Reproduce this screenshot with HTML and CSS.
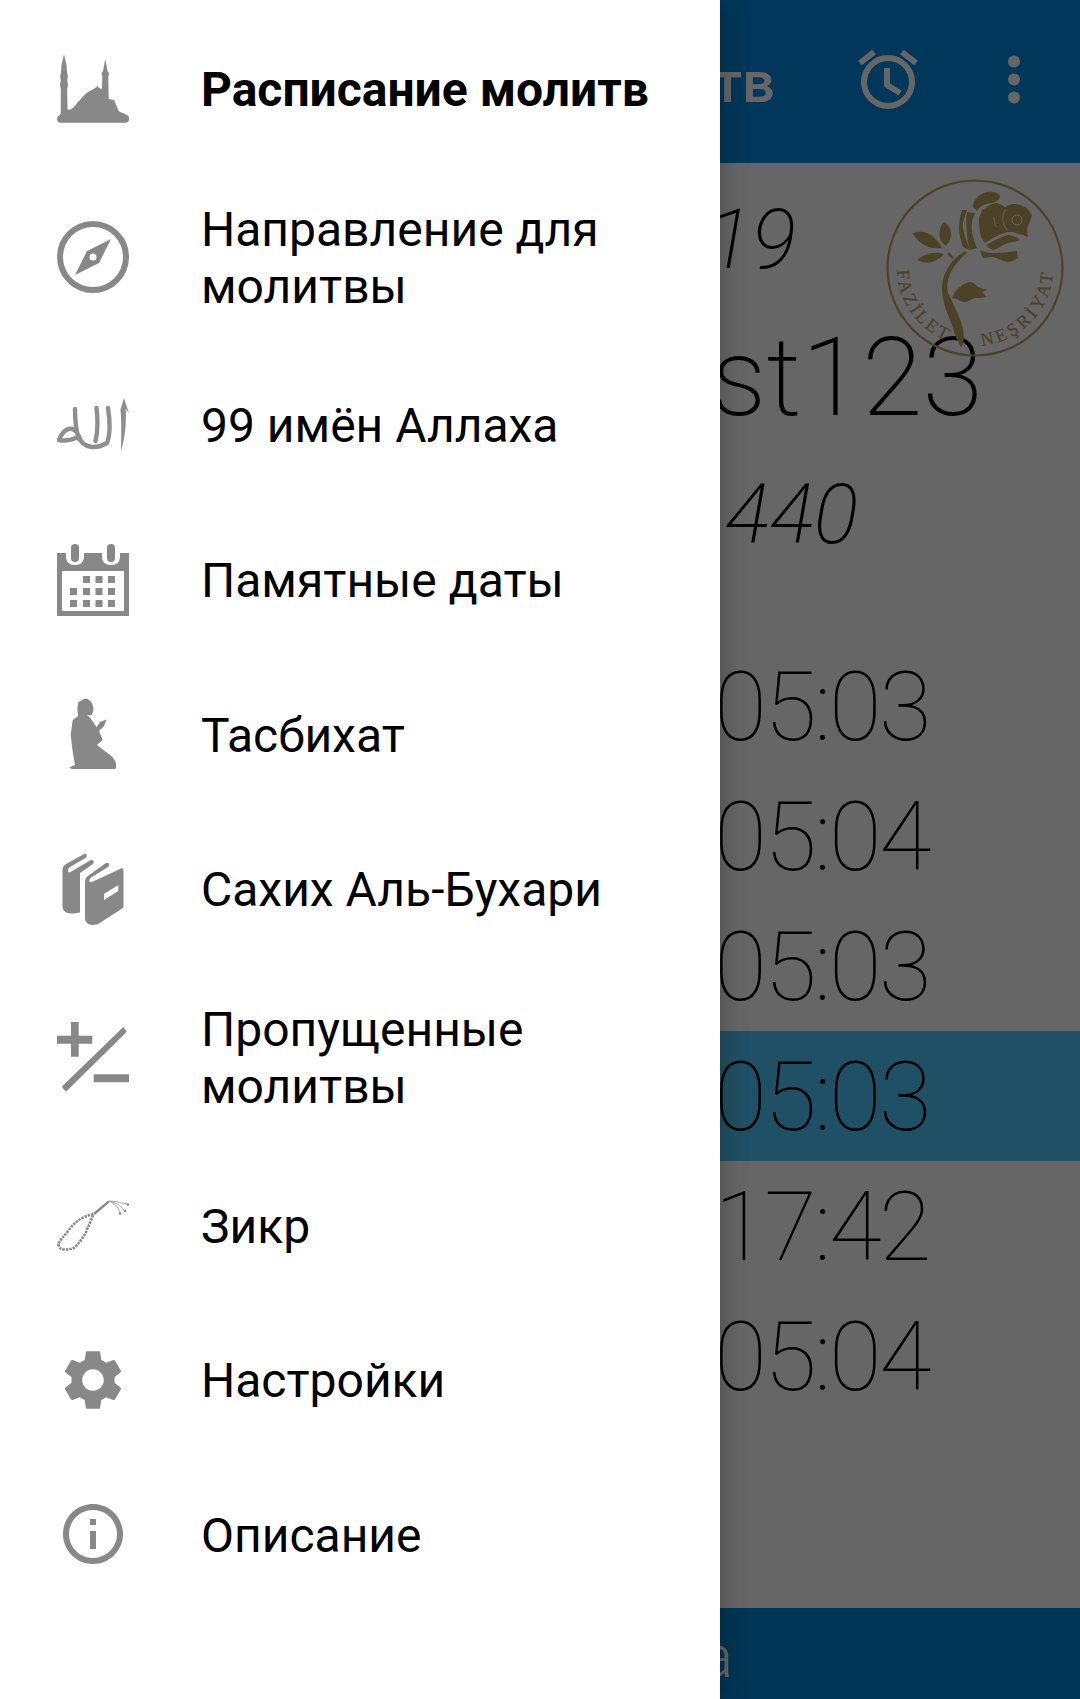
FILE: index.html
```html
<!DOCTYPE html>
<html lang="ru">
<head>
<meta charset="utf-8">
<title>Расписание молитв</title>
<link rel="stylesheet" href="styles.css">
</head>
<body>
<div class="screen">
  <div class="app">
    <header class="toolbar">
      <div class="toolbar-title">Расписание молитв</div>
      <svg class="alarm" viewBox="0 0 72 72"><circle cx="36" cy="36" r="24" fill="none" stroke="#fff" stroke-width="6"/><path d="M35 22V39L48 47M8 17L22 6M64 17L50 6" fill="none" stroke="#fff" stroke-width="6"/></svg>
      <svg class="more" viewBox="0 0 12 72"><circle cx="6" cy="15.5" r="6" fill="#fff"/><circle cx="6" cy="33.5" r="6" fill="#fff"/><circle cx="6" cy="51.5" r="6" fill="#fff"/></svg>
    </header>
    <main class="content">
      <div class="date date-greg">2019</div>
      <div class="city">Test123</div>
      <div class="date date-hijri">1440</div>
      <ul class="times">
        <li class="time">05:03</li>
        <li class="time">05:04</li>
        <li class="time">05:03</li>
        <li class="time time-now">05:03</li>
        <li class="time">17:42</li>
        <li class="time">05:04</li>
      </ul>
    </main>
    <footer class="bottombar"><span class="bottom-text">Мекка</span></footer>
    <svg class="logo" viewBox="0 0 190 190">
      <circle cx="95" cy="93" r="87.5" fill="none" stroke="#c0a55f" stroke-width="2.2"/>
      <g fill="#c0a55f">
        <path d="M33 58C45 54 55 60 62 73C48 75 38 68 33 58Z"/>
        <path d="M64 47C72 52 74 62 66 71C58 66 57 54 64 47Z"/>
        <path d="M37 85C45 78 55 76 64 79C58 86 47 91 37 85Z"/>
        <path d="M68 78L73 83" stroke="#c0a55f" stroke-width="2.5"/>
        <path d="M93 32C92 26 100 18 107 17C113 16 120 18 120 22C119 26 112 28 107 29C102 30 99 33 97 36Z"/>
        <path d="M102 35C106 33 110 29 115 28C119 28 122 30 125 32C128 30 131 29 133 29C139 29 144 31 147 33L152 40C151 45 149 49 147 53L148 62L133 57H128C121 59 114 62 110 65L105 68C102 64 100 61 100 57C99 52 99 47 99 43Z"/>
        <path d="M106 70C113 66 121 62 128 60C132 60 137 62 140 65C136 67 132 67 128 68C122 70 118 74 113 75C110 74 108 72 106 70Z"/>
        <path d="M100 75C104 77 108 78 113 78C121 78 130 77 137 76L138 83C135 85 131 87 128 87C122 86 117 83 113 82C109 82 106 83 103 83Z"/>
        <path d="M82 35H87C85 42 82 47 83 53C84 60 87 68 90 75C87 74 85 73 83 72C81 66 79 60 79 53C79 47 80 41 82 35Z"/>
        <path d="M87 37L95 38C92 44 91 50 92 57C93 63 95 68 97 73L90 75C88 69 87 63 87 57C86 50 86 43 87 37Z"/>
        <path d="M72 123C74 118 77 114 80 112C83 109 87 107 90 107C93 107 96 110 98 112L107 115L102 117L107 122C103 123 99 123 95 123C92 124 88 127 85 127C82 127 79 125 77 124Z"/>
      </g>
      <path d="M126 34C121 40 122 49 127 55M113 42C116 46 113 50 117 52" fill="none" stroke="#fff" stroke-width=".8"/>
      <circle cx="137" cy="45" r="5" fill="none" stroke="#fff" stroke-width="1"/>
      <path d="M85 76C72 84 63 96 62 112C62 128 68 140 72 150C75 160 78 168 81 172C84 170 85 160 82 150C79 140 72 126 68 118C65 105 72 90 87 78Z" fill="#c0a55f"/>
      <path id="logoArc" d="M17 93A78 78 0 0 0 173 93" fill="none"/>
      <text class="logo-text"><textPath href="#logoArc" startOffset="2" textLength="90" lengthAdjust="spacing">FAZİLET</textPath></text>
      <text class="logo-text"><textPath href="#logoArc" startOffset="129" textLength="110" lengthAdjust="spacing">NEŞRİYAT</textPath></text>
    </svg>
  </div>
  <div class="scrim"></div>
  <nav class="drawer">
    <a class="item item-active">
      <svg class="icon" viewBox="0 0 72 72"><path d="M7 1L9.500 12L10 20L11 23L10.200 27L11 32L10.200 36L10.500 56L12 57C17 56 20 49 23 47C26 43 30 39 34 37.500L39.700 34L40 32L41 34L45 36.500L45.300 24L44.500 20L46 18L48.300 6L50.500 18L52 20L51.300 24L51.700 46L57 47L60 54L62 58.500C66 60 70 61.500 72 63.700V66C72 68.500 70.500 69.700 68.500 69.700H3.500C1.500 69.700 0 68.500 0 65.500C1 63 2.500 62 3.700 61L3.800 36L3 32L3.800 27L3 23L4 20L4.500 12Z" fill="#888"/></svg>
      <span class="label">Расписание молитв</span>
    </a>
    <a class="item item-tall">
      <svg class="icon" viewBox="0 0 72 72"><circle cx="36" cy="36" r="33" fill="none" stroke="#888" stroke-width="6"/><path fill-rule="evenodd" d="M54 18L42 42L18 54L30 30ZM36 32.5A3.5 3.5 0 1 0 36 39.5A3.5 3.5 0 1 0 36 32.5Z" fill="#888"/></svg>
      <span class="label">Направление для молитвы</span>
    </a>
    <a class="item">
      <svg class="icon" viewBox="0 0 72 72"><path d="M67 9L72 24L68.800 20C69.400 34 68 50 64 62C64.200 48 64.600 34 63.600 21L62.800 22.500Z" fill="#8f8f8f"/><path d="M18 20C18 30 19 42 22 50M39.500 19C41 32 41 42 38.500 52M51 19C53 32 54 44 50 54M1.800 51C8 37 18 36 22 48C26 60 40 60 50 54M1.800 51C8 52 15 52 22 47" fill="none" stroke="#8f8f8f" stroke-width="4.400" stroke-linecap="round"/></svg>
      <span class="label">99 имён Аллаха</span>
    </a>
    <a class="item">
      <svg class="icon" viewBox="0 0 72 72"><path fill-rule="evenodd" d="M0 9H9V12C9 18 12 21 18 21C24 21 27 18 27 12V9H45V12C45 18 48 21 54 21C60 21 63 18 63 12V9H72V72H0ZM5 27V67H67V27Z" fill="#888"/><rect x="14" y="0" width="8" height="18" rx="4" fill="#888"/><rect x="50" y="0" width="8" height="18" rx="4" fill="#888"/><path d="M26 32h7v7h-7zM38.500 32h7v7h-7zM51 32h7v7h-7zM13 44h7v7h-7zM26 44h7v7h-7zM38.500 44h7v7h-7zM51 44h7v7h-7zM13 56h7v7h-7zM26 56h7v7h-7zM38.500 56h7v7h-7zM51 56h7v7h-7z" fill="#888"/></svg>
      <span class="label">Памятные даты</span>
    </a>
    <a class="item">
      <svg class="icon" viewBox="0 0 72 72"><path d="M28 0.500C33 1 36 5 36.500 11L35 17L30 17.500L32.500 19L39.700 29L43 24L49.700 21.500L47 28L42 33L45.700 42L40 47L53 57C57 60 60 64 59 70L58 71H15L12 69.500L18 67L15.700 54L13.700 37L15.700 22L21 18L20.300 10L21.500 4Z" fill="#888"/></svg>
      <span class="label">Тасбихат</span>
    </a>
    <a class="item">
      <svg class="icon" viewBox="0 0 72 72"><path d="M28 0.500C30 1 30.500 3.500 28.500 5L13 14C10 16 10.500 20.500 13.500 19L33 7.500C36 6 38 9 36 11L23 20V59.500L17 60.500C9 61 5.500 58 5.500 53V17C5.500 14 7 12 9 11Z" fill="#888"/><path fill-rule="evenodd" d="M49 10C52 9 53 12 51 14L35 24C31 27 32 30 35 29L64 15.500C66 15 66.500 16 66.500 18V53C66.500 54.500 66 55 64.500 56L42 70.500C36 73.500 28 72 28 65V30C28 26 29 24 31.500 22.500ZM47 41V47L61.300 38V32Z" fill="#888"/></svg>
      <span class="label">Сахих Аль-Бухари</span>
    </a>
    <a class="item item-tall">
      <svg class="icon" viewBox="0 0 72 72"><path d="M14 1H21.700V14.700H35.300V22.700H21.700V35.700H14V22.700H0V14.700H14ZM66.300 6L69.700 10.800L9 70.700L4.700 65.700ZM36.700 53.300H72V61.300H36.700Z" fill="#888"/></svg>
      <span class="label">Пропущенные молитвы</span>
    </a>
    <a class="item">
      <svg class="icon" viewBox="0 0 72 72"><path d="M36.300 25.300C27 27 18 32 12 41C7 47 3 51 1.300 55.300C2 59 4 60.500 8 60.500C12 60.500 16 60 18 58C22 54 25 50 28 45.300C31 38 34 32 36.300 25.300" fill="none" stroke="#888" stroke-width="2.600" stroke-dasharray="2.400 1"/><path d="M37 25L52 12.300" fill="none" stroke="#888" stroke-width="2.400"/><path d="M52 12C58 12 65 14 71 15.300M53 12.500C58 13 64 17 68 22M54 13C58 15 62 19 63 24.300" fill="none" stroke="#999" stroke-width="0.900"/><circle cx="71" cy="15.500" r="1.300" fill="#888"/><circle cx="68" cy="22" r="1.300" fill="#888"/><circle cx="63" cy="24.500" r="1.300" fill="#888"/></svg>
      <span class="label">Зикр</span>
    </a>
    <a class="item">
      <svg class="icon" viewBox="0 0 24 24"><path d="M19.140 12.940c.04-.3.06-.61.06-.94 0-.32-.02-.64-.07-.94l2.030-1.580c.18-.14.23-.41.12-.61l-1.920-3.320c-.12-.22-.37-.29-.59-.22l-2.390.96c-.5-.38-1.030-.7-1.620-.94l-.36-2.540c-.04-.24-.24-.41-.48-.41h-3.840c-.24 0-.43.17-.47.41l-.36 2.540c-.59.24-1.130.57-1.620.94l-2.390-.96c-.22-.08-.47 0-.59.22L2.740 8.870c-.12.21-.08.47.12.61l2.030 1.580c-.05.3-.09.63-.09.94s.02.64.07.94l-2.030 1.580c-.18.14-.23.41-.12.61l1.920 3.320c.12.22.37.29.59.22l2.390-.96c.5.38 1.030.7 1.620.94l.36 2.540c.05.24.24.41.48.41h3.840c.24 0 .44-.17.47-.41l.36-2.540c.59-.24 1.130-.56 1.620-.94l2.390.96c.22.08.47 0 .59-.22l1.920-3.320c.12-.22.07-.47-.12-.61l-2.010-1.580zM12 15.600c-1.980 0-3.600-1.620-3.600-3.600s1.620-3.600 3.600-3.600 3.600 1.620 3.600 3.600-1.620 3.600-3.600 3.600z" fill="#888"/></svg>
      <span class="label">Настройки</span>
    </a>
    <a class="item">
      <svg class="icon" viewBox="0 0 24 24"><path d="M11 7h2v2h-2zm0 4h2v6h-2zm1-9C6.480 2 2 6.480 2 12s4.480 10 10 10 10-4.480 10-10S17.520 2 12 2zm0 18c-4.410 0-8-3.590-8-8s3.590-8 8-8 8 3.590 8 8-3.590 8-8 8z" fill="#888"/></svg>
      <span class="label">Описание</span>
    </a>
  </nav>
</div>
</body>
</html>
```
FILE: styles.css
```css
* { box-sizing: border-box; }
html, body { margin: 0; padding: 0; }
body { font-family: Roboto, "Noto Sans", sans-serif; background: #fff; color: #000; }
.screen { position: relative; width: 1080px; height: 1699px; overflow: hidden; }

.app { display: flex; flex-direction: column; height: 100%; background: #fff; }
.toolbar { display: flex; align-items: center; justify-content: flex-end; flex: 0 0 163px; background: #008ae0; color: #fff; padding-right: 60px; }
.toolbar-title { flex: none; font-size: 58px; font-weight: 500; white-space: nowrap; margin-right: 77px; }
.alarm { flex: none; width: 72px; height: 72px; margin-right: 84px; }
.more { flex: none; width: 12px; height: 72px; }

.content { flex: 1; display: flex; flex-direction: column; align-items: flex-end; }
.date { font-size: 83px; line-height: 100px; font-style: italic; font-weight: 200; }
.date-greg { margin: 27px 284px 0 0; }
.city { font-size: 110px; line-height: 130px; font-weight: 200; margin: 23px 97px 0 0; }
.date-hijri { margin: 22px 222px 0 0; }
.times { list-style: none; margin: 76px 0 0; padding: 0; width: 100%; }
.time { height: 130px; line-height: 132px; font-size: 96px; font-weight: 100; letter-spacing: -2.5px; text-align: right; padding-right: 151px; }
.time-now { background: #50c8fc; }

.bottombar { flex: 0 0 91px; background: #0086d4; display: flex; justify-content: flex-end; align-items: center; padding: 6px 347px 0 0; }
.bottom-text { color: #fff; font-size: 60px; font-weight: 300; white-space: nowrap; }

.logo { position: absolute; left: 880px; top: 175px; width: 190px; height: 190px; }
.logo-text { font-family: "Liberation Serif", serif; font-size: 18px; fill: #c0a55f; stroke: #c0a55f; stroke-width: .25px; }

.scrim { position: absolute; inset: 0; background: rgba(0, 0, 0, .6); }

.drawer { position: absolute; left: 0; top: 0; bottom: 0; width: 720px; background: #fff; padding-top: 14px; box-shadow: 0 0 26px rgba(0, 0, 0, .3); }
.item { display: flex; align-items: center; height: 154.67px; padding-left: 57px; }
.item-tall { height: 181.5px; }
.icon { flex: none; width: 72px; height: 72px; margin: -5px 72px 0 0; }
.label { flex: 1; font-size: 48px; line-height: 57px; padding-right: 60px; margin-bottom: 3px; }
.item-active .label { font-weight: 700; padding-right: 0; }
```
